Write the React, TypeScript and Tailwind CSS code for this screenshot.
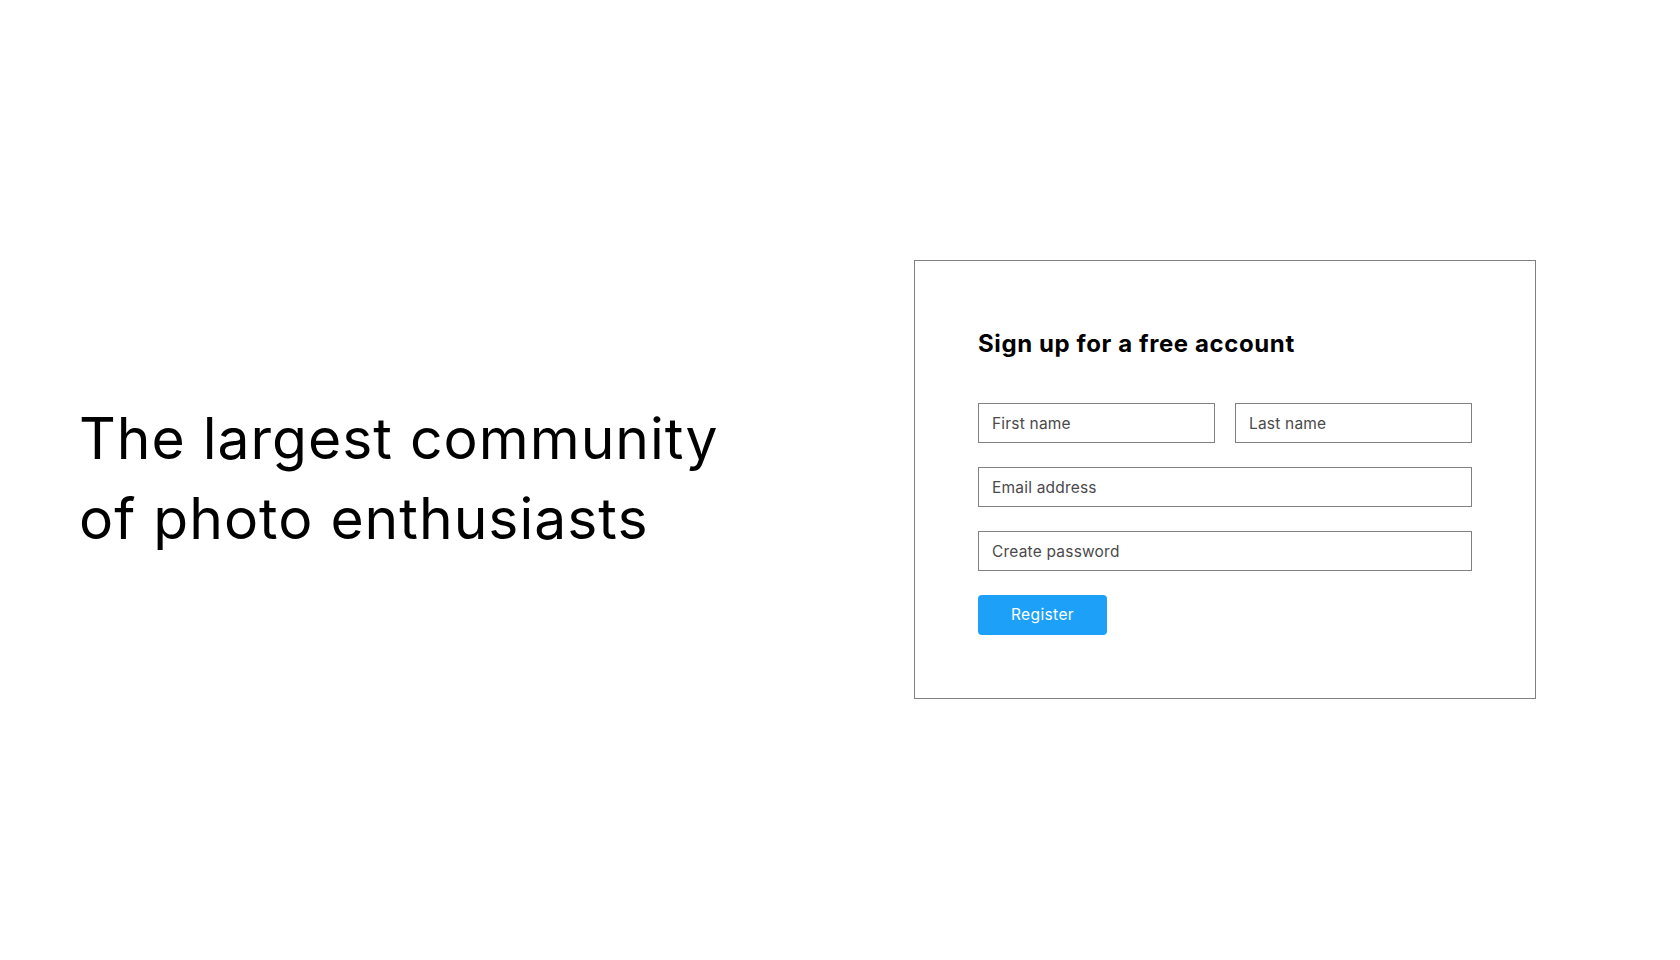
import React from "react";

export default function App() {
  const font = { fontFamily: "Inter, 'Noto Sans', sans-serif" };
  return (
    <div
      className="w-[1680px] h-[960px] bg-white flex items-center justify-between pl-[80px] pr-[144px] pb-[2px]"
      style={font}
    >
      <h1 className="text-[57px] leading-[80px] font-normal text-black tracking-[1px] -ml-[1px]">
        The largest community
        <br />
        of photo enthusiasts
      </h1>
      <div className="w-[622px] h-[439px] border border-[#808080] px-[63px] pt-[65px] flex flex-col">
        <h2 className="text-[24px] leading-[36px] font-bold text-black tracking-[0.6px]">Sign up for a free account</h2>
        <div className="mt-[41px] flex flex-col gap-[24px]">
          <div className="flex gap-[20px]">
            <input
              placeholder="First name"
              className="w-[237px] h-[40px] border border-[#808080] px-[13px] pt-[1px] text-[15.5px] tracking-[0.2px] text-[#333] placeholder:text-[#4a4a4a] outline-none"
            />
            <input
              placeholder="Last name"
              className="w-[237px] h-[40px] border border-[#808080] px-[13px] pt-[1px] text-[15.5px] tracking-[0.2px] text-[#333] placeholder:text-[#4a4a4a] outline-none"
            />
          </div>
          <input
            placeholder="Email address"
            className="w-[494px] h-[40px] border border-[#808080] px-[13px] pt-[1px] text-[15.5px] tracking-[0.2px] text-[#333] placeholder:text-[#4a4a4a] outline-none"
          />
          <input
            placeholder="Create password"
            className="w-[494px] h-[40px] border border-[#808080] px-[13px] pt-[1px] text-[15.5px] tracking-[0.2px] text-[#333] placeholder:text-[#4a4a4a] outline-none"
          />
          <button className="w-[129px] h-[40px] rounded-[4px] bg-[#1da1f8] text-white text-[15.5px] tracking-[0.4px]">
            Register
          </button>
        </div>
      </div>
    </div>
  );
}
